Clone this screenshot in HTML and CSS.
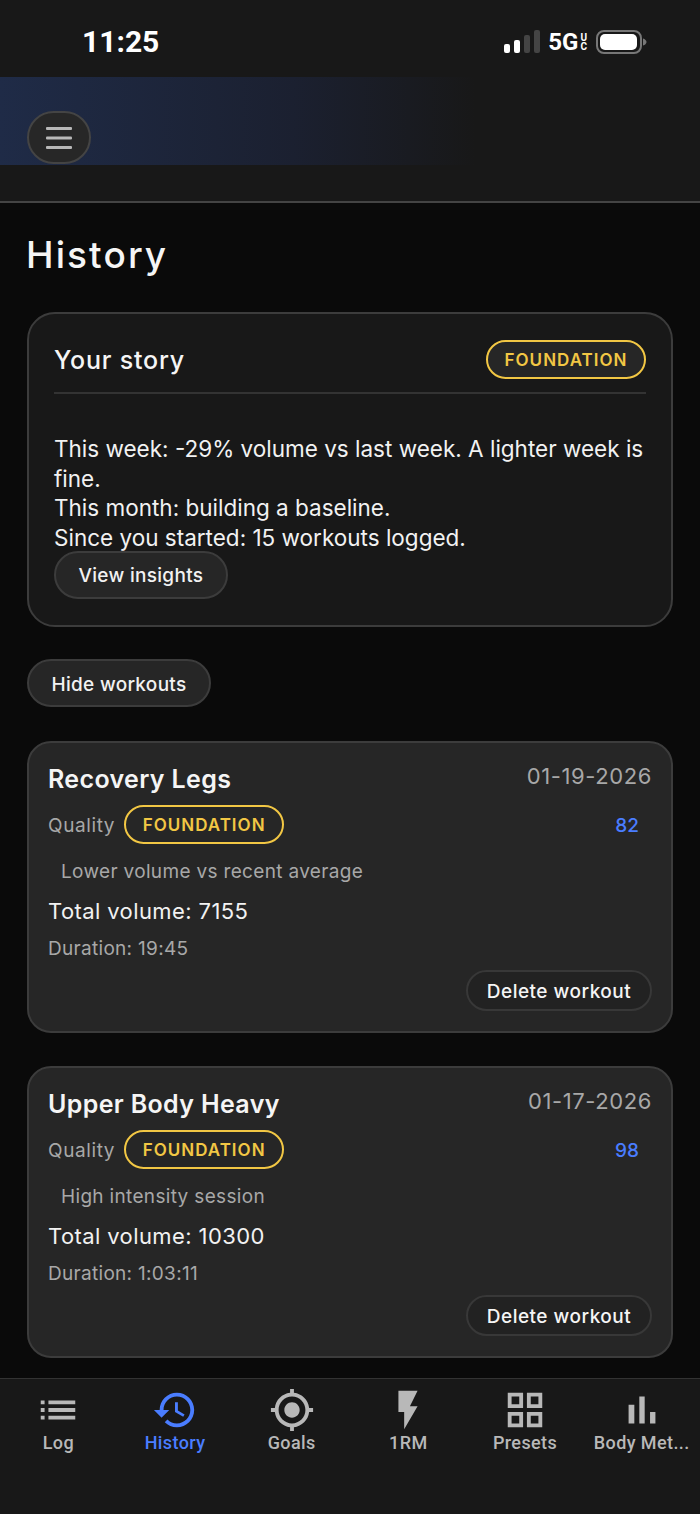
FILE: index.html
```html
<!DOCTYPE html>
<html lang="en">
<head>
  <meta charset="UTF-8">
  <title>History</title>
  <meta name="viewport" content="width=device-width, initial-scale=1.0">
  <link rel="stylesheet" href="styles.css">
</head>
<body>
  <div class="status-bar">
    <div class="clock">11:25</div>
    <div class="status-icons">
      <svg class="signal" width="36" height="23" viewBox="0 0 36 23">
        <rect x="0" y="14" width="6" height="9" rx="2" fill="#fff"/>
        <rect x="10" y="10" width="6" height="13" rx="2" fill="#fff"/>
        <rect x="20" y="5" width="6" height="18" rx="2" fill="#444"/>
        <rect x="30" y="0" width="6" height="23" rx="2" fill="#444"/>
      </svg>
      <div class="network">
        <span class="network-main">5G</span>
        <span class="network-sub"><span>U</span><span>C</span></span>
      </div>
      <svg class="battery" width="51" height="24" viewBox="0 0 51 24">
        <rect x="1" y="1" width="44" height="22" rx="7" fill="none" stroke="#777" stroke-width="2"/>
        <rect x="4" y="4" width="37" height="16" rx="5" fill="#fff"/>
        <path d="M47 8.5c2 .5 3.5 2 3.5 3.5s-1.500 3-3.500 3.500z" fill="#777"/>
      </svg>
    </div>
  </div>

  <div class="header">
    <div class="header-band">
      <button class="menu-btn">
        <svg width="26" height="24" viewBox="0 0 26 24">
          <rect x="0" y="1" width="26" height="3" rx="1" fill="#b8b8b8"/>
          <rect x="0" y="10.500" width="26" height="3" rx="1" fill="#b8b8b8"/>
          <rect x="0" y="20" width="26" height="3" rx="1" fill="#b8b8b8"/>
        </svg>
      </button>
    </div>
  </div>

  <div class="content">
    <h1 class="page-title">History</h1>

    <div class="story-card">
      <div class="story-header">
        <div class="story-title">Your story</div>
        <div class="tier-pill">FOUNDATION</div>
      </div>
      <div class="story-text">
        <div>This week: -29% volume vs last week. A lighter week is fine.</div>
        <div>This month: building a baseline.</div>
        <div>Since you started: 15 workouts logged.</div>
      </div>
      <button class="pill-btn">View insights</button>
    </div>

    <button class="pill-btn hide-btn">Hide workouts</button>

    <div class="workout-card">
      <div class="workout-top">
        <div class="workout-name">Recovery Legs</div>
        <div class="workout-date">01-19-2026</div>
      </div>
      <div class="quality-row">
        <span class="quality-label">Quality</span>
        <div class="tier-pill">FOUNDATION</div>
        <span class="quality-score">82</span>
      </div>
      <div class="quality-reason">Lower volume vs recent average</div>
      <div class="workout-volume">Total volume: 7155</div>
      <div class="workout-duration">Duration: 19:45</div>
      <div class="workout-actions">
        <button class="delete-btn">Delete workout</button>
      </div>
    </div>

    <div class="workout-card">
      <div class="workout-top">
        <div class="workout-name">Upper Body Heavy</div>
        <div class="workout-date">01-17-2026</div>
      </div>
      <div class="quality-row">
        <span class="quality-label">Quality</span>
        <div class="tier-pill">FOUNDATION</div>
        <span class="quality-score">98</span>
      </div>
      <div class="quality-reason">High intensity session</div>
      <div class="workout-volume">Total volume: 10300</div>
      <div class="workout-duration">Duration: 1:03:11</div>
      <div class="workout-actions">
        <button class="delete-btn">Delete workout</button>
      </div>
    </div>
  </div>

  <nav class="tab-bar">
    <div class="tab">
      <svg viewBox="0 0 24 24"><path d="M3 13h2v-2H3v2zm0 4h2v-2H3v2zm0-8h2V7H3v2zm4 4h14v-2H7v2zm0 4h14v-2H7v2zM7 7v2h14V7H7z"/></svg>
      <span>Log</span>
    </div>
    <div class="tab active">
      <svg viewBox="0 0 24 24"><path d="M13 3c-4.970 0-9 4.030-9 9H1l3.890 3.890.07.14L9 12H6c0-3.870 3.130-7 7-7s7 3.130 7 7-3.130 7-7 7c-1.930 0-3.680-.79-4.940-2.060l-1.420 1.420C8.270 19.990 10.510 21 13 21c4.970 0 9-4.030 9-9s-4.030-9-9-9zm-1 5v5l4.280 2.540.72-1.210-3.500-2.080V8H12z"/></svg>
      <span>History</span>
    </div>
    <div class="tab">
      <svg viewBox="0 0 24 24"><path d="M12 8c-2.210 0-4 1.790-4 4s1.790 4 4 4 4-1.790 4-4-1.790-4-4-4zm8.940 3c-.46-4.170-3.770-7.480-7.940-7.940V1h-2v2.060C6.830 3.520 3.520 6.830 3.060 11H1v2h2.060c.46 4.170 3.770 7.480 7.940 7.940V23h2v-2.060c4.170-.46 7.480-3.770 7.940-7.940H23v-2h-2.060zM12 19c-3.870 0-7-3.130-7-7s3.130-7 7-7 7 3.130 7 7-3.130 7-7 7z"/></svg>
      <span>Goals</span>
    </div>
    <div class="tab">
      <svg viewBox="0 0 24 24"><path d="M7 2v11h3v9l7-12h-4l4-8z"/></svg>
      <span>1RM</span>
    </div>
    <div class="tab">
      <svg viewBox="0 0 24 24"><path d="M3 3v8h8V3H3zm6 6H5V5h4v4zm-6 4v8h8v-8H3zm6 6H5v-4h4v4zm4-16v8h8V3h-8zm6 6h-4V5h4v4zm-6 4v8h8v-8h-8zm6 6h-4v-4h4v4z"/></svg>
      <span>Presets</span>
    </div>
    <div class="tab">
      <svg viewBox="0 0 24 24"><path d="M5 9.200h3V19H5zM10.600 5h2.800v14h-2.800zm5.600 8H19v6h-2.800z"/></svg>
      <span>Body Met...</span>
    </div>
  </nav>
</body>
</html>
```

FILE: styles.css
```css
* {
  box-sizing: border-box;
}
body {
  width: 700px;
  height: 1514px;
  margin: 0;
  display: flex;
  flex-direction: column;
  overflow: hidden;
  font-family: Inter, "Noto Sans", sans-serif;
  font-size: 22px;
  background: #0a0a0a;
  color: #f2f2f2;
}
button {
  font-family: inherit;
  cursor: pointer;
}
.status-bar {
  height: 77px;
  flex-shrink: 0;
  background: #181818;
  display: flex;
  justify-content: space-between;
  align-items: center;
  padding: 6px 53px 0 82px;
}
.clock {
  font-family: Roboto, sans-serif;
  font-size: 30px;
  font-weight: 700;
  color: #fff;
}
.status-icons {
  display: flex;
  align-items: center;
  gap: 9px;
}
.signal {
  margin-right: -1px;
}
.network {
  display: flex;
  align-items: center;
  gap: 2px;
  color: #fff;
  font-family: Roboto, sans-serif;
  font-weight: 700;
}
.network-main {
  font-size: 24px;
  line-height: 24px;
}
.network-sub {
  display: flex;
  flex-direction: column;
  font-size: 10px;
  line-height: 9px;
}
.header {
  height: 126px;
  flex-shrink: 0;
  background: #181818;
  border-bottom: 2px solid #444;
}
.header-band {
  height: 88px;
  padding: 34px 0 0 27px;
  background: linear-gradient(90deg, #1f2b47 0%, #1b2030 42%, #181818 68%);
}
.menu-btn {
  width: 64px;
  height: 53px;
  border-radius: 27px;
  border: 2px solid #444;
  background: #272727;
  display: flex;
  align-items: center;
  justify-content: center;
  padding: 0;
}
.content {
  flex: 1;
  padding: 0 27px;
  min-height: 0;
}
.page-title {
  margin: 29px 0 34px -1px;
  font-size: 37px;
  line-height: 46px;
  font-weight: 500;
  letter-spacing: 2.1px;
  color: #f5f5f5;
}
.story-card {
  height: 315px;
  padding: 26px 25px 0;
  background: #181818;
  border: 2px solid #3c3c3c;
  border-radius: 28px;
}
.story-header {
  display: flex;
  justify-content: space-between;
  align-items: center;
  padding-bottom: 13px;
  border-bottom: 2px solid #333;
}
.story-title {
  font-size: 25px;
  font-weight: 500;
  letter-spacing: 0.8px;
  color: #f5f5f5;
}
.tier-pill {
  height: 39px;
  width: 160px;
  display: flex;
  align-items: center;
  justify-content: center;
  border: 2px solid #f2c744;
  border-radius: 20px;
  background: #262626;
  color: #f2c744;
  font-size: 17px;
  font-weight: 600;
  letter-spacing: 1px;
}
.story-text {
  margin-top: 40px;
  font-size: 22.500px;
  line-height: 29.500px;
}
.pill-btn {
  height: 48px;
  padding: 0 22.500px;
  border: 2px solid #3c3c3c;
  border-radius: 24px;
  background: #262626;
  color: #f2f2f2;
  font-size: 19px;
  font-weight: 500;
  letter-spacing: 0.3px;
}
.story-text + .pill-btn {
  margin-top: -1px;
}
.hide-btn {
  display: block;
  margin: 32px 0 34px;
  padding-top: 2px;
}
.workout-card {
  height: 292px;
  margin-bottom: 33px;
  padding: 19px 19px 0;
  background: #262626;
  border: 2px solid #3c3c3c;
  border-radius: 24px;
}
.workout-top {
  display: flex;
  justify-content: space-between;
  align-items: flex-start;
  height: 43px;
}
.workout-name {
  font-size: 25px;
  line-height: 34px;
  font-weight: 600;
  letter-spacing: 0.35px;
  color: #f5f5f5;
}
.workout-date {
  font-size: 22px;
  line-height: 28px;
  letter-spacing: 0.6px;
  color: #a8a8a8;
}
.quality-row {
  display: flex;
  align-items: center;
  gap: 9px;
}
.quality-row .tier-pill {
  padding-top: 1px;
}
.quality-label {
  padding-top: 2px;
  font-size: 19px;
  letter-spacing: 0.6px;
  color: #a8a8a8;
}
.quality-score {
  margin-left: auto;
  margin-right: 13px;
  padding-top: 2px;
  font-size: 19px;
  font-weight: 500;
  color: #4a7dff;
}
.quality-reason {
  margin: 16px 0 0 13px;
  font-size: 19px;
  line-height: 24px;
  letter-spacing: 0.33px;
  color: #a8a8a8;
}
.workout-volume {
  margin-top: 12px;
  font-size: 22px;
  line-height: 30px;
  letter-spacing: 0.4px;
  color: #f2f2f2;
}
.workout-duration {
  margin-top: 11px;
  font-size: 19px;
  line-height: 24px;
  letter-spacing: 0.3px;
  color: #a8a8a8;
}
.workout-actions {
  display: flex;
  justify-content: flex-end;
  margin-top: 9px;
}
.delete-btn {
  height: 41px;
  width: 186px;
  padding: 2px 0 0;
  border: 2px solid #383838;
  border-radius: 21px;
  background: #222;
  color: #f5f5f5;
  font-size: 19px;
  font-weight: 500;
  letter-spacing: 0.5px;
}
.tab-bar {
  height: 136px;
  flex-shrink: 0;
  display: flex;
  padding-top: 8px;
  background: #181818;
  border-top: 1px solid #333;
}
.tab {
  flex: 1;
  min-width: 0;
  display: flex;
  flex-direction: column;
  align-items: center;
  color: #b8b8b8;
  font-family: Roboto, sans-serif;
  font-size: 18px;
  font-weight: 500;
  line-height: 20px;
  letter-spacing: 0.4px;
  white-space: nowrap;
}
.tab svg {
  width: 46px;
  height: 46px;
  fill: currentColor;
}
.tab.active {
  color: #4a7dff;
}
```
